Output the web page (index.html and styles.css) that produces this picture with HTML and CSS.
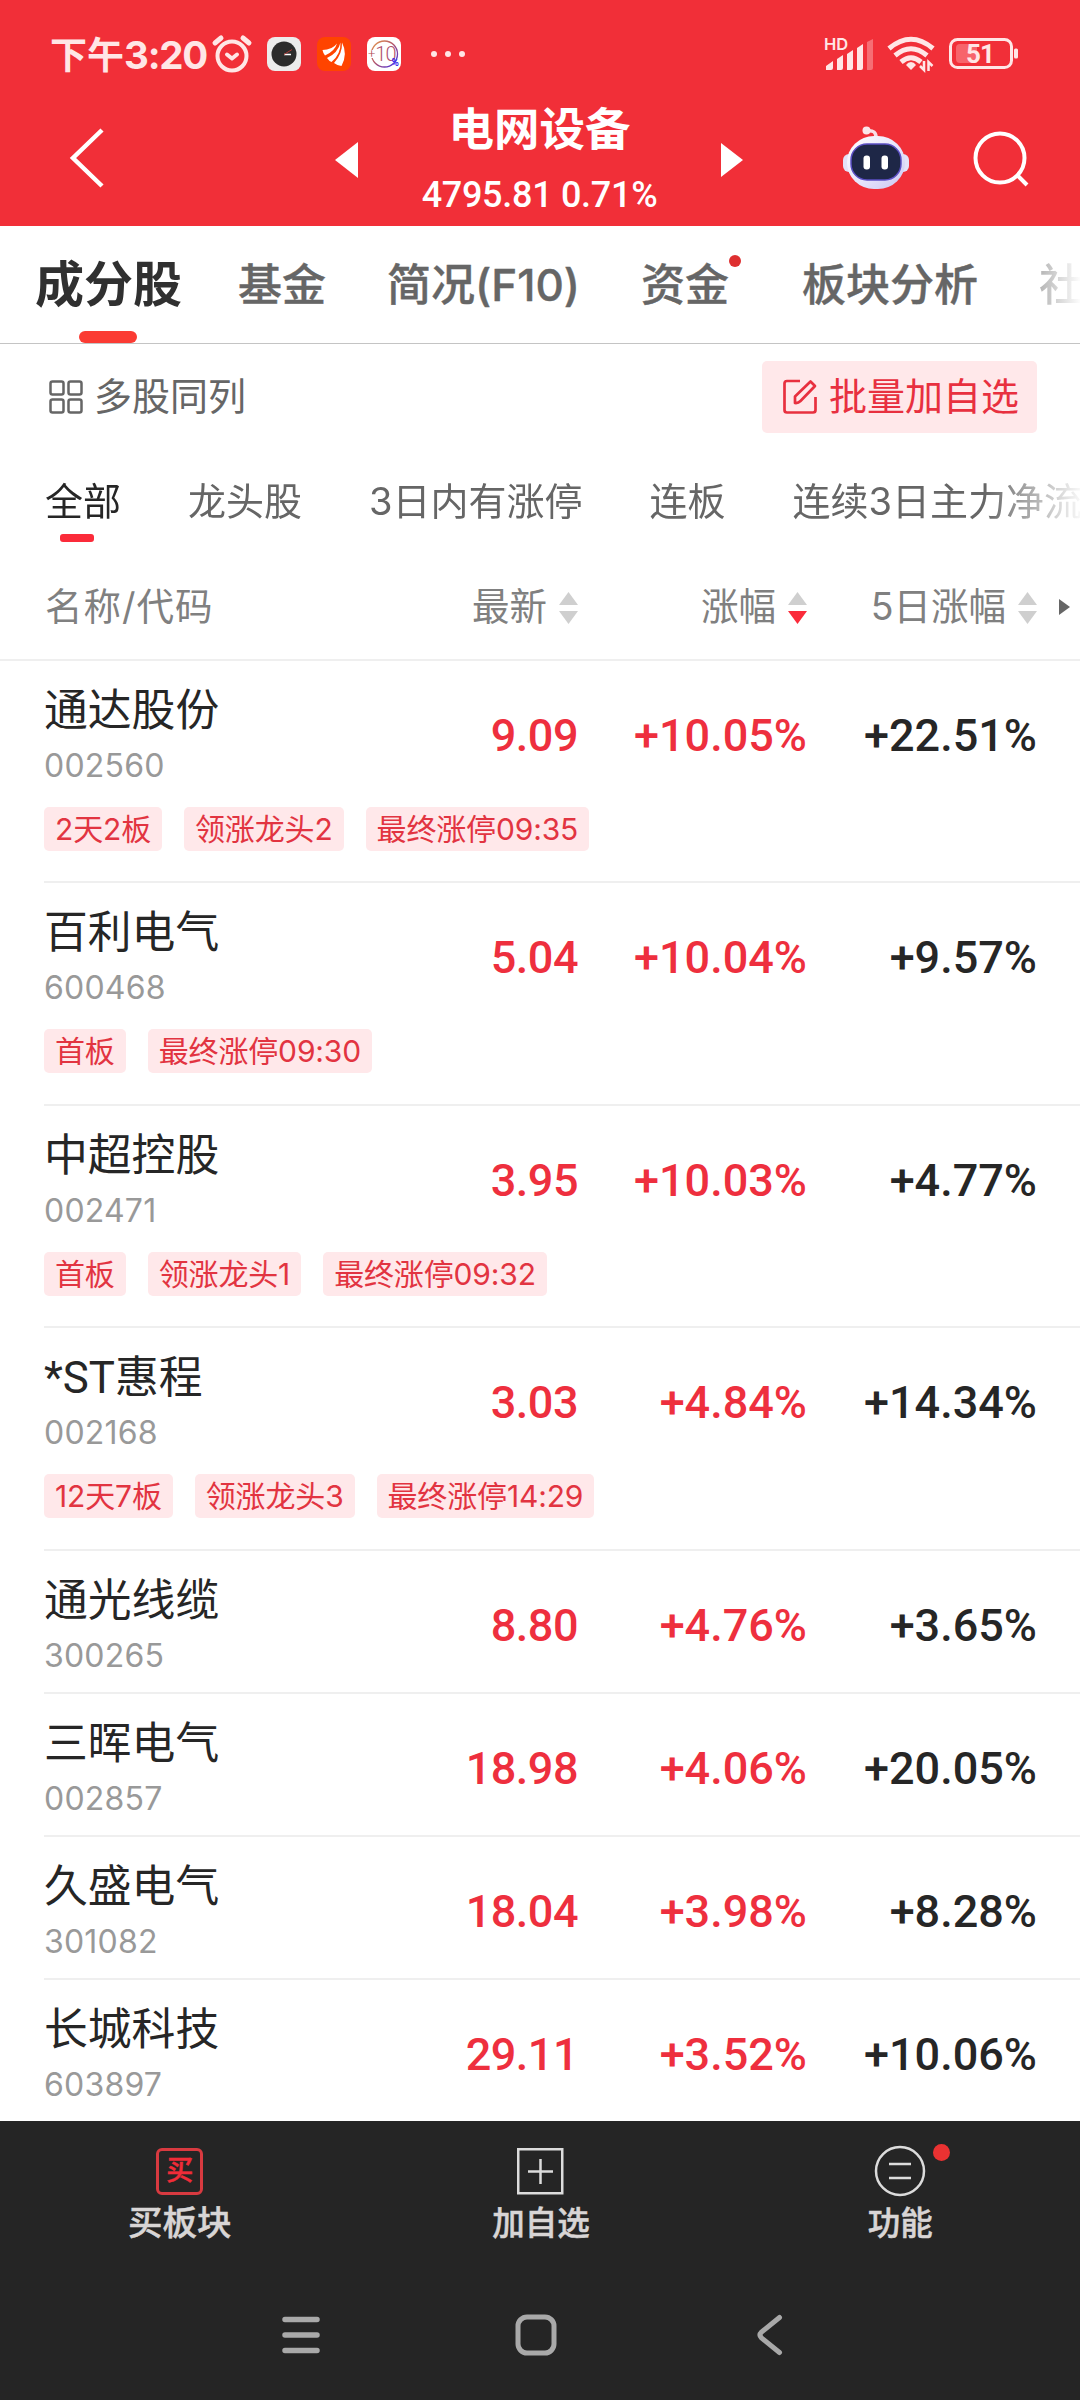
FILE: index.html
```html
<!DOCTYPE html>
<html lang="zh-CN">
<head>
    <meta charset="UTF-8">
    <meta name="viewport" content="width=device-width, initial-scale=1.0">
    <title>电网设备 - 成分股</title>
    <link rel="stylesheet" href="styles.css">
</head>
<body>
    <header class="header">
        <div class="status">
            <span class="time">下午<b>3:20</b></span>
            <svg class="alarm" width="40" height="38" viewBox="0 0 40 38" fill="none" stroke="#ffe6e6" stroke-width="4" stroke-linecap="round">
                <circle cx="20" cy="21" r="14.5"/>
                <path d="M3 8L9 3M37 8L31 3" stroke-width="5"/>
                <path d="M15 19.500l5 4 5-4" stroke-linejoin="round"/>
            </svg>
            <svg class="app" width="34" height="34" viewBox="0 0 34 34">
                <rect width="34" height="34" rx="8" fill="#ececec"/>
                <circle cx="17" cy="17" r="12.500" fill="#2c2c2c"/>
                <path d="M17 17.500h7" stroke="#fff" stroke-width="1.500"/>
                <path d="M17 17.500l8-5" stroke="#b03a35" stroke-width="1"/>
            </svg>
            <svg class="app" width="34" height="34" viewBox="0 0 34 34">
                <rect width="34" height="34" rx="8" fill="#ff4400"/>
                <path d="M5.500 13Q15 13 20 6.500Q18 14 8 18.500Q6 16 5.500 13Z" fill="#fff"/>
                <path d="M10 21Q21 16 23.500 5.500Q24 17 14.500 25Q12 24 10 21Z" fill="#fff"/>
                <path d="M17 26Q25.500 17 25 5.500Q31 17 24.500 29Q21 29 17 26Z" fill="#fff"/>
            </svg>
            <svg class="app" width="34" height="34" viewBox="0 0 34 34">
                <defs>
                    <linearGradient id="ring" x1="0" y1="0" x2="1" y2="1">
                        <stop offset="0" stop-color="#e79a4a"/>
                        <stop offset="0.500" stop-color="#b0506c"/>
                        <stop offset="1" stop-color="#3a2cf0"/>
                    </linearGradient>
                </defs>
                <rect width="34" height="34" rx="8" fill="#fff"/>
                <circle cx="17.500" cy="17" r="13" fill="none" stroke="url(#ring)" stroke-width="1.300"/>
                <rect x="2" y="13" width="6" height="8" fill="#fff"/>
                <text class="app-num" x="1" y="24"><tspan class="app-plus" dy="-3">+</tspan><tspan dy="3">10</tspan><tspan class="app-pct" dx="-4" dy="5">%</tspan></text>
            </svg>
            <span class="dots"><i></i><i></i><i></i></span>
            <svg class="signal" width="51" height="34" viewBox="0 0 51 34" fill="#ffe6e6">
                <text class="hd" x="0" y="13">HD</text>
                <path d="M2 33v-4l7-5v7q0 2-2 2zM13 33V22l6-4v13q0 2-2 2zM23 33V17l6-4v18q0 2-2 2zM33 33V11l6-4v24q0 2-2 2z"/>
                <path d="M43 33V5l6-3v29q0 2-2 2z" opacity="0.350"/>
            </svg>
            <svg class="wifi" width="48" height="36" viewBox="0 0 48 36" fill="none" stroke="#ffe6e6" stroke-width="5">
                <path d="M2 12.500Q24-6 46 12.500"/>
                <path d="M8 19.500Q24 6 40 19.500"/>
                <path d="M14 26Q24 17.500 34 26"/>
                <path d="M24 26q3 0 5 3l-5 5-5-5q2-3 5-3z" fill="#ffe6e6" stroke="none"/>
                <path d="M37 25v9l-4-4M41.500 35v-9l4 4" stroke-width="2.500"/>
            </svg>
            <svg class="battery" width="70" height="32" viewBox="0 0 70 32">
                <rect x="1.500" y="1.500" width="61" height="28" rx="7" fill="none" stroke="#ffe6e6" stroke-width="3"/>
                <path d="M11 6h17v19H11q-4 0-4-4V10q0-4 4-4z" fill="#f7646b"/>
                <rect x="65" y="10.500" width="4" height="10" rx="1.500" fill="#ffe6e6"/>
                <text class="level" x="31" y="24.500">51</text>
            </svg>
        </div>
        <div class="titlebar">
            <svg class="back" width="34" height="60" viewBox="0 0 34 60" fill="none" stroke="#fff" stroke-width="4.500">
                <path d="M32 2L3 30l29 28"/>
            </svg>
            <svg class="prev" width="23" height="36" viewBox="0 0 23 36"><path d="M23 0v36L0 18z" fill="#fff"/></svg>
            <div class="title">
                <h1>电网设备</h1>
                <p>4795.81 0.71%</p>
            </div>
            <svg class="next" width="22" height="34" viewBox="0 0 22 34"><path d="M0 0v34L22 17z" fill="#fff"/></svg>
            <svg class="robot" width="68" height="64" viewBox="0 0 68 64">
                <defs>
                    <linearGradient id="shell" x1="0" y1="0" x2="1" y2="1">
                        <stop offset="0" stop-color="#fff"/>
                        <stop offset="0.600" stop-color="#e4e2fb"/>
                        <stop offset="1" stop-color="#c9c6f0"/>
                    </linearGradient>
                </defs>
                <path d="M24 5q11-2 10 8" fill="none" stroke="#f8dfe6" stroke-width="3.500"/>
                <circle cx="24.500" cy="4.500" r="4" fill="#fbe6ea"/>
                <rect x="1" y="28" width="66" height="18" rx="6" fill="#e3e1f8"/>
                <rect x="5" y="10" width="58" height="53" rx="27" fill="url(#shell)"/>
                <rect x="9" y="18" width="50" height="36" rx="16" fill="#1e2747" stroke="#5b4fc4" stroke-width="1.500"/>
                <rect x="21.500" y="29.500" width="6.500" height="14" rx="3" fill="#fff"/>
                <rect x="39.500" y="29.500" width="6.500" height="14" rx="3" fill="#fff"/>
            </svg>
            <svg class="search" width="56" height="56" viewBox="0 0 56 56" fill="none" stroke="#fff" stroke-width="4">
                <circle cx="27" cy="27" r="24.500"/>
                <path d="M44 44l10 10"/>
            </svg>
        </div>
    </header>

    <nav class="tabs">
        <a class="tab active">成分股</a>
        <a class="tab">基金</a>
        <a class="tab">简况(F10)</a>
        <a class="tab marked">资金<span class="badge"></span></a>
        <a class="tab">板块分析</a>
        <a class="tab">社</a>
    </nav>

    <section class="toolbar">
        <div class="multi">
            <svg width="34" height="34" viewBox="0 0 34 34" fill="none" stroke="#666" stroke-width="2.500">
                <rect x="1.500" y="1.500" width="13" height="13" rx="2"/>
                <rect x="19.500" y="1.500" width="13" height="13" rx="2"/>
                <rect x="1.500" y="19.500" width="13" height="13" rx="2"/>
                <rect x="19.500" y="19.500" width="13" height="13" rx="2"/>
            </svg>
            <span>多股同列</span>
        </div>
        <div class="batch">
            <svg width="34" height="35" viewBox="0 0 34 35" fill="none" stroke="#e8303f" stroke-width="2.700" stroke-linejoin="round">
                <path d="M17 2H4Q1.500 2 1.500 4.500V31Q1.500 33.500 4 33.500H30Q32.500 33.500 32.500 31V18"/>
                <path d="M12 24V17.500L27.500 2.500L32 7L17.500 22Q15 24.500 12 24z"/>
            </svg>
            <span>批量加自选</span>
        </div>
    </section>

    <nav class="filters">
        <a class="filter active">全部</a>
        <a class="filter">龙头股</a>
        <a class="filter">3日内有涨停</a>
        <a class="filter">连板</a>
        <a class="filter">连续3日主力净流</a>
    </nav>

    <div class="columns">
        <span class="col-name">名称/代码</span>
        <span class="col"><span>最新</span>
            <svg class="sort" width="19" height="32" viewBox="0 0 19 32"><path class="off" d="M9.500 0L19 13H0z"/><path class="off" d="M9.500 32L19 19H0z"/></svg>
        </span>
        <span class="col"><span>涨幅</span>
            <svg class="sort" width="19" height="32" viewBox="0 0 19 32"><path class="off" d="M9.500 0L19 13H0z"/><path class="on" d="M9.500 32L19 19H0z"/></svg>
        </span>
        <span class="col"><span>5日涨幅</span>
            <svg class="sort" width="19" height="32" viewBox="0 0 19 32"><path class="off" d="M9.500 0L19 13H0z"/><path class="off" d="M9.500 32L19 19H0z"/></svg>
        </span>
        <svg class="more" width="11" height="16" viewBox="0 0 11 16"><path d="M0 0v16L11 8z" fill="#666"/></svg>
    </div>

    <main class="list">
        <article class="stock tagged">
            <div class="row">
                <div class="name"><h2>通达股份</h2><p>002560</p></div>
                <b class="up price">9.09</b><b class="up">+10.05%</b><b>+22.51%</b>
            </div>
            <div class="tags"><span>2天2板</span><span>领涨龙头2</span><span>最终涨停09:35</span></div>
        </article>
        <article class="stock tagged">
            <div class="row">
                <div class="name"><h2>百利电气</h2><p>600468</p></div>
                <b class="up price">5.04</b><b class="up">+10.04%</b><b>+9.57%</b>
            </div>
            <div class="tags"><span>首板</span><span>最终涨停09:30</span></div>
        </article>
        <article class="stock tagged">
            <div class="row">
                <div class="name"><h2>中超控股</h2><p>002471</p></div>
                <b class="up price">3.95</b><b class="up">+10.03%</b><b>+4.77%</b>
            </div>
            <div class="tags"><span>首板</span><span>领涨龙头1</span><span>最终涨停09:32</span></div>
        </article>
        <article class="stock tagged">
            <div class="row">
                <div class="name"><h2>*ST惠程</h2><p>002168</p></div>
                <b class="up price">3.03</b><b class="up">+4.84%</b><b>+14.34%</b>
            </div>
            <div class="tags"><span>12天7板</span><span>领涨龙头3</span><span>最终涨停14:29</span></div>
        </article>
        <article class="stock">
            <div class="row">
                <div class="name"><h2>通光线缆</h2><p>300265</p></div>
                <b class="up price">8.80</b><b class="up">+4.76%</b><b>+3.65%</b>
            </div>
        </article>
        <article class="stock">
            <div class="row">
                <div class="name"><h2>三晖电气</h2><p>002857</p></div>
                <b class="up price">18.98</b><b class="up">+4.06%</b><b>+20.05%</b>
            </div>
        </article>
        <article class="stock">
            <div class="row">
                <div class="name"><h2>久盛电气</h2><p>301082</p></div>
                <b class="up price">18.04</b><b class="up">+3.98%</b><b>+8.28%</b>
            </div>
        </article>
        <article class="stock">
            <div class="row">
                <div class="name"><h2>长城科技</h2><p>603897</p></div>
                <b class="up price">29.11</b><b class="up">+3.52%</b><b>+10.06%</b>
            </div>
        </article>
    </main>

    <footer class="footer">
        <div class="actions">
            <a class="action buy">
                <span class="buy-icon">买</span>
                <span>买板块</span>
            </a>
            <a class="action">
                <svg width="50" height="52" viewBox="0 0 50 52" fill="none" stroke="#dcdcdc" stroke-width="2.500">
                    <rect x="2.250" y="4.250" width="44" height="44"/>
                    <path d="M12 26.500h25M24.500 14v25"/>
                </svg>
                <span>加自选</span>
            </a>
            <a class="action">
                <svg width="52" height="52" viewBox="0 0 52 52" fill="none" stroke="#dcdcdc" stroke-width="2.500">
                    <circle cx="26" cy="26" r="24"/>
                    <path d="M15 19h22M15 33h22"/>
                </svg>
                <span>功能</span>
                <i class="notice"></i>
            </a>
        </div>
        <div class="system">
            <svg width="38" height="42" viewBox="0 0 38 42" stroke="#a9a9a9" stroke-width="5.500" stroke-linecap="round">
                <path d="M3 5.500h32M3 21h32M3 36.500h32"/>
            </svg>
            <svg class="home" width="42" height="42" viewBox="0 0 42 42" fill="none" stroke="#a9a9a9" stroke-width="5">
                <rect x="3" y="3" width="36" height="36" rx="9"/>
            </svg>
            <svg width="26" height="42" viewBox="0 0 26 42" fill="none" stroke="#a9a9a9" stroke-width="5" stroke-linecap="round">
                <path d="M22.500 3.500L4.500 18Q1.500 21 4.500 24L22.500 38.500"/>
            </svg>
        </div>
    </footer>
</body>
</html>
```
FILE: styles.css
```css
* {
    box-sizing: border-box;
    margin: 0;
    padding: 0;
}

body {
    width: 1080px;
    height: 2400px;
    display: flex;
    flex-direction: column;
    overflow: hidden;
    background: #fff;
    color: #262626;
    font-family: Inter, 'Noto Sans CJK SC', sans-serif;
}

svg {
    display: block;
    flex: none;
    overflow: visible;
}

a, span {
    white-space: nowrap;
}

/* Header */
.header {
    height: 226px;
    flex: none;
    background: #f12f38;
    color: #fff;
}

.status {
    height: 108px;
    display: flex;
    align-items: center;
    padding: 0 61px 0 50px;
    color: #ffe6e6;
}

.time {
    width: 162px;
    padding-bottom: 3px;
    font-size: 37px;
    font-weight: 700;
}

.time b {
    font-size: 38.5px;
    font-weight: 700;
    letter-spacing: -1.2px;
}

.alarm {
    margin-right: 15px;
}

.app {
    margin-right: 16px;
}

.app-num {
    font-family: Roboto, sans-serif;
    font-size: 20px;
    font-weight: 300;
    letter-spacing: -1px;
    fill: #b0506c;
}

.app-plus {
    font-size: 13px;
    letter-spacing: 0;
    fill: #b04a52;
}

.app-pct {
    font-size: 10px;
    font-weight: 700;
    fill: #3a2cf0;
}

.dots {
    display: flex;
    gap: 8px;
    margin-left: 14px;
    margin-right: auto;
}

.dots i {
    width: 6px;
    height: 6px;
    border-radius: 50%;
    background: #ffe6e6;
}

.hd {
    font-size: 16.5px;
    font-weight: 600;
}

.signal {
    margin-right: 12px;
}

.wifi {
    margin-right: 14px;
}

.level {
    font-family: Roboto, sans-serif;
    font-size: 26px;
    font-weight: 700;
    letter-spacing: -1px;
    text-anchor: middle;
    fill: #ffe6e6;
}

.titlebar {
    height: 118px;
    display: flex;
    align-items: flex-start;
    padding-left: 70px;
}

.back {
    margin-top: 20px;
}

.prev {
    margin: 34px 0 0 231px;
}

.title {
    width: 363px;
    text-align: center;
}

.title h1 {
    font-size: 45.5px;
    line-height: 44px;
    font-weight: 700;
}

.title p {
    margin-top: 21px;
    font-family: Roboto, sans-serif;
    font-size: 36px;
    line-height: 44px;
    font-weight: 500;
    letter-spacing: -0.3px;
}

.next {
    margin-top: 35px;
}

.robot {
    margin: 18px 0 0 99px;
}

.search {
    margin: 23px 0 0 63px;
}

/* Tabs */
.tabs {
    height: 118px;
    flex: none;
    display: flex;
    align-items: center;
    padding-left: 35px;
    border-bottom: 1px solid #c4c4c4;
    overflow: hidden;
}

.tab {
    position: relative;
    margin-right: 61px;
    font-size: 44px;
    line-height: 60px;
    font-weight: 500;
    color: #666;
    -webkit-text-stroke: 0.4px #666;
}

.tab.active {
    margin-right: 56px;
    font-size: 49px;
    font-weight: 700;
    color: #303030;
    -webkit-text-stroke: 0;
}

.tab.active::after {
    content: '';
    position: absolute;
    left: 44px;
    bottom: -28px;
    width: 58px;
    height: 12px;
    border-radius: 6px;
    background: #fb3b33;
}

.tab.marked {
    margin-right: 73px;
}

.badge {
    position: absolute;
    top: 0;
    right: -12px;
    width: 12px;
    height: 12px;
    border-radius: 50%;
    background: #de2f30;
}

.tab:last-child {
    margin-right: 0;
    color: transparent;
    background: linear-gradient(90deg, #b4b4b4, #fff 42px);
    background-clip: text;
    -webkit-text-stroke: 0;
}

/* Toolbar */
.toolbar {
    height: 107px;
    flex: none;
    display: flex;
    justify-content: space-between;
    align-items: center;
    padding: 0 43px 2px 49px;
    font-size: 38px;
}

.toolbar span {
    padding-bottom: 6px;
}

.multi {
    display: flex;
    align-items: center;
    gap: 11px;
    color: #666;
}

.batch {
    width: 275px;
    height: 72px;
    display: flex;
    align-items: center;
    gap: 12px;
    padding-left: 21px;
    border-radius: 5px;
    background: #ffe8ea;
    color: #e8303f;
}

/* Filters */
.filters {
    height: 106px;
    flex: none;
    display: flex;
    align-items: center;
    padding: 0 0 6px 45px;
    overflow: hidden;
    mask-image: linear-gradient(90deg, #000 985px, transparent 1085px);
}

.filter {
    position: relative;
    margin-right: 67px;
    font-size: 38px;
    line-height: 52px;
    color: #666;
}

.filter:last-child {
    margin-right: 0;
}

.filter.active {
    color: #262626;
}

.filter.active::after {
    content: '';
    position: absolute;
    left: 15px;
    bottom: -15px;
    width: 34px;
    height: 8px;
    border-radius: 3px;
    background: #fb2b3a;
}

/* Column titles */
.columns {
    height: 104px;
    flex: none;
    display: grid;
    grid-template-columns: 355px 178px 229px 230px 1fr;
    align-items: center;
    padding-left: 45px;
    border-bottom: 2px solid #efefef;
    font-size: 37.5px;
    color: #808080;
}

.col-name {
    padding-bottom: 10px;
    letter-spacing: 1px;
}

.col {
    display: flex;
    justify-content: flex-end;
    align-items: center;
    gap: 12px;
}

.col span {
    padding-bottom: 10px;
}

.sort .off {
    fill: #cfcfcf;
}

.sort .on {
    fill: #fb2b3a;
}

.more {
    margin-left: 22px;
    margin-bottom: 2px;
}

/* Stock list */
.list {
    flex: 1;
    overflow: hidden;
}

.stock {
    height: 143.2px;
    margin-left: 44px;
    border-bottom: 2px solid #efefef;
}

.stock.tagged {
    height: 222.4px;
}

.row {
    height: 146px;
    display: grid;
    grid-template-columns: 356px 178px 229px 230px;
}

.name h2 {
    padding-top: 19px;
    font-family: Roboto, 'Noto Sans CJK SC', sans-serif;
    font-size: 43.8px;
    line-height: 62px;
    font-weight: 400;
}

.name p {
    font-size: 32px;
    line-height: 46px;
    margin-top: 1px;
    letter-spacing: 0.2px;
    color: #999;
}

.row b {
    padding-top: 43px;
    font-family: Roboto, sans-serif;
    font-size: 45px;
    line-height: 64px;
    font-weight: 500;
    text-align: right;
}

.row .up {
    color: #ee2f3e;
}

.row .price {
    letter-spacing: -0.5px;
}

.tags {
    display: flex;
    gap: 22px;
}

.tags span {
    height: 44px;
    padding: 0 11px;
    border-radius: 5px;
    background: #ffe8ea;
    color: #e23441;
    font-size: 30px;
    line-height: 44px;
    letter-spacing: -0.15px;
}

/* Footer */
.footer {
    height: 279px;
    flex: none;
    background: #252525;
}

.actions {
    height: 144px;
    display: flex;
}

.action {
    position: relative;
    flex: 1;
    display: flex;
    flex-direction: column;
    align-items: center;
    padding-top: 24px;
    font-size: 32.5px;
    line-height: 48px;
    font-weight: 500;
    color: #d8d5d5;
    -webkit-text-stroke: 0.5px;
}

.action.buy {
    padding: 27px 2px 0 0;
    font-size: 34.5px;
}

.action svg + span {
    margin-top: 3px;
}

.buy-icon {
    width: 47px;
    height: 47px;
    margin-bottom: 4px;
    border: 3px solid #d83a40;
    border-radius: 6px;
    text-align: center;
    font-size: 27px;
    line-height: 40px;
    color: #f02c38;
}

.notice {
    position: absolute;
    left: 212px;
    top: 23px;
    width: 17px;
    height: 17px;
    border-radius: 50%;
    background: #ea3232;
}

.system {
    height: 138px;
    display: flex;
    align-items: center;
    justify-content: space-between;
    padding: 2px 297px 0 282px;
}

.home {
    margin-right: 5px;
}
```
